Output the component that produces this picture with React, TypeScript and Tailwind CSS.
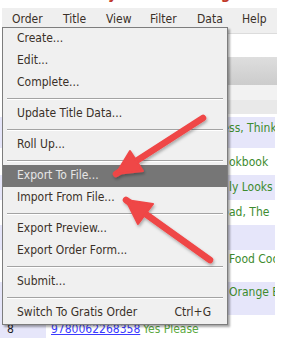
import React from "react";

type Item = { label: string; shortcut?: string; active?: boolean } | "sep";

const menuItems: Item[] = [
  { label: "Create..." },
  { label: "Edit..." },
  { label: "Complete..." },
  "sep",
  { label: "Update Title Data..." },
  "sep",
  { label: "Roll Up..." },
  "sep",
  { label: "Export To File...", active: true },
  { label: "Import From File..." },
  "sep",
  { label: "Export Preview..." },
  { label: "Export Order Form..." },
  "sep",
  { label: "Submit..." },
  "sep",
  { label: "Switch To Gratis Order", shortcut: "Ctrl+G" },
];

const rows = [
  { h: "h-[31px]", pt: "pt-[4px]", bg: "bg-[#e6e6fa]", pre: "The Power of Le", post: "ss, Thinking Small" },
  { h: "h-[27px]", pt: "pt-[7px]", bg: "bg-white", pre: "The Family Co", post: "okbook" },
  { h: "h-[25px]", pt: "pt-[5px]", bg: "bg-[#e6e6fa]", pre: "What Real Fami", post: "ly Looks Like" },
  { h: "h-[25px]", pt: "pt-[5px]", bg: "bg-white", pre: "Home Sweet Ro", post: "ad, The" },
  { h: "h-[25px]", pt: "pt-[5px]", bg: "bg-[#e6e6fa]", pre: "", post: "" },
  { h: "h-[32px]", pt: "pt-[2px]", bg: "bg-white", pre: "The Real", post: "Food Cookbook" },
  { h: "h-[33px]", pt: "pt-[3px]", bg: "bg-[#e6e6fa]", pre: "A Bag of", post: "Orange Blossoms" },
];

const menuBar = ["Order", "Title", "View", "Filter", "Data", "Help"];

function Arrow({ tail, tip, w1, w2 }: { tail: string; tip: [number, number]; w1: [number, number]; w2: [number, number] }) {
  return (
    <g filter="url(#sh)">
      <path d={`M${tail} L${tip[0]} ${tip[1]}`} stroke="#ef4646" strokeWidth="6.5" strokeLinecap="round" fill="none" />
      <path d={`M${tip[0]} ${tip[1]} L${w1[0]} ${w1[1]} L${w2[0]} ${w2[1]} Z`} fill="#ef4646" stroke="#ef4646" strokeWidth="2" strokeLinejoin="round" />
    </g>
  );
}

export default function App() {
  return (
    <div className="relative w-[300px] h-[358px] overflow-hidden bg-white font-['DejaVu_Sans_Condensed','Liberation_Sans',sans-serif] text-[12px] text-[#333]">
      {/* clipped heading above the window, only descenders show */}
      <div className="h-[8px] overflow-hidden">
        <div className="-mt-[14px] flex text-[15px] leading-[16px] font-bold text-[#c0392b]">
          <span className="ml-[108px]">y</span>
          <span className="ml-[104px]">g</span>
        </div>
      </div>

      <div className="w-[275px] ml-[2px]">
        {/* menu bar */}
        <div className="grid h-[25px] grid-cols-[51px_43px_44px_47px_45px_1fr] items-center bg-[#efefef] pl-[10px] pb-[4px] text-[#3a3028]">
          {menuBar.map((m) => (
            <span key={m}>{m}</span>
          ))}
        </div>
        <div className="h-px bg-[#dcdcdc]" />
        <div className="h-[23px] bg-white" />
        <div className="h-[28px] bg-gradient-to-b from-[#dedede] to-[#cccccc]" />
        <div className="h-[15px] bg-[#f2f2f2]" />
        <div className="h-[14px] bg-[#e9e9e9]" />
        <div className="h-[3px] bg-white" />
      </div>

      {/* table rows */}
      <div className="w-[275px]">
        {rows.map((r, i) => (
          <div key={i} className={`${r.h} ${r.bg} ${r.pt} flex overflow-hidden whitespace-nowrap leading-[14px]`}>
            <span className="w-[143px] shrink-0" />
            <span className="inline-block w-[86px] shrink-0 overflow-hidden text-[#3d8b2f]">{r.pre}</span>
            <span className="text-[#3d8b2f]">{r.post}</span>
          </div>
        ))}
        <div className="flex h-[23px] leading-[14px] whitespace-nowrap">
          <span className="w-[46px] shrink-0 bg-[#e6e6fa] pl-[7px] pt-[7px] text-[#222]">8</span>
          <span className="w-[97px] shrink-0 pl-[5px] pt-[7px] text-[#3b3bff] underline">9780062268358</span>
          <span className="pt-[7px] text-[#5aa83e]">Yes Please</span>
        </div>
      </div>

      {/* Order dropdown */}
      <div className="absolute left-[2px] top-[27px] w-[226px] border border-[#7d7d7d] bg-[#f0f0f0] shadow-[2px_2px_2px_rgba(0,0,0,0.35)]">
        {menuItems.map((it, i) =>
          it === "sep" ? (
            <div key={i} className="flex h-[9px] items-center px-[4px]">
              <div className="w-full border-t border-b border-t-[#a3a3a3] border-b-white" />
            </div>
          ) : (
            <div
              key={i}
              className={`flex h-[22px] items-center justify-between pl-[14px] pr-[16px] pb-[2px] ${
                it.active ? "bg-[#767676] text-[#e6e6e6]" : "text-[#3a3028]"
              }`}
            >
              <span>{it.label}</span>
              {it.shortcut && <span>{it.shortcut}</span>}
            </div>
          )
        )}
      </div>

      {/* annotation arrows */}
      <svg className="absolute inset-0" width="300" height="358" viewBox="0 0 300 358">
        <defs>
          <filter id="sh" x="-20%" y="-20%" width="140%" height="140%">
            <feDropShadow dx="1" dy="2" stdDeviation="1.5" floodColor="#000" floodOpacity="0.3" />
          </filter>
        </defs>
        <Arrow tail="203 118" tip={[116, 174]} w1={[130, 151]} w2={[143, 171]} />
        <Arrow tail="210 260" tip={[126, 200]} w1={[153, 204]} w2={[138, 224]} />
      </svg>
    </div>
  );
}
